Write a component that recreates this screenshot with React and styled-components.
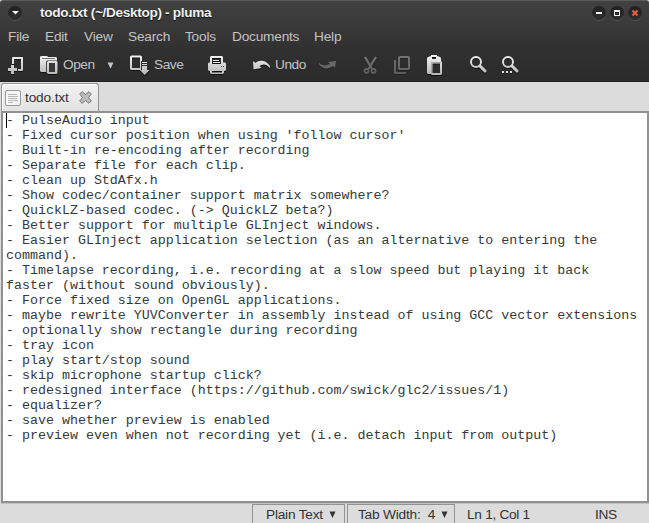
import React from "react";
import styled, { createGlobalStyle } from "styled-components";

const Global = createGlobalStyle`
  * { box-sizing: border-box; }
  html, body { margin: 0; overflow: hidden; background: #dcdcdc; }
  body {
    font: 13.7px/16px "Liberation Sans", Arial, sans-serif;
    letter-spacing: -0.22px;
    color: #333;
  }
`;

const Window = styled.div`
  width: 649px;
  height: 523px;
  display: flex;
  flex-direction: column;
  overflow: hidden;
  background: #dcdcdc;
`;

const Chrome = styled.header`
  height: 82px;
  flex: none;
  background: linear-gradient(#414141 0, #393939 25px, #303030 50px, #2b2b2b 81px);
  border-top: 1px solid #5b5b5b;
  border-bottom: 1px solid #202020;
  border-radius: 3px 3px 0 0;
  color: #c2c2c2;
`;

const TitleBar = styled.div`
  height: 24px;
  display: flex;
  align-items: center;
  padding: 0 7px 0 8px;
`;

const Title = styled.h1`
  flex: 1;
  margin: 0 0 0 18px;
  font-size: 13.6px;
  line-height: 16px;
  font-weight: bold;
  letter-spacing: -0.32px;
  color: #f0f0f0;
  text-shadow: 0 1px 1px #111;
`;

const WindowButton = styled.span`
  width: 14px;
  height: 14px;
  margin-left: ${(p) => p.$gap || 0}px;
  border-radius: 50%;
  background: linear-gradient(#202020, #303030);
  box-shadow: 0 1px 0 #555;
  svg { display: block; }
`;

const MenuBar = styled.nav`
  height: 24px;
  display: flex;
  align-items: center;
  padding-left: 8px;
`;

const MenuItem = styled.span`
  width: ${(p) => p.$w}px;
  white-space: nowrap;
`;

const ToolBar = styled.div`
  height: 32px;
  display: flex;
  align-items: flex-start;
  padding: 6px 0 0 7px;
`;

const Tool = styled.span`
  width: ${(p) => p.$w}px;
  height: 20px;
  display: flex;
  flex: none;
  align-items: center;
  opacity: ${(p) => (p.$off ? 0.35 : 1)};
  svg { flex: none; filter: drop-shadow(0 1px 0 #111); }
`;

const ToolLabel = styled.span`
  margin-left: ${(p) => p.$gap}px;
  line-height: 19px;
  height: 20px;
  letter-spacing: -0.45px;
`;

const TabStrip = styled.div`
  height: 29px;
  flex: none;
  display: flex;
  align-items: flex-end;
  padding-left: 1px;
`;

const Tab = styled.div`
  width: 98px;
  height: 28px;
  display: flex;
  align-items: center;
  padding-left: 3px;
  border: 1px solid #929292;
  border-bottom: 0;
  border-radius: 3px 3px 0 0;
  background: linear-gradient(#f1f1f1, #e3e3e3);
  box-shadow: inset 1px 1px 0 #fff;
`;

const TabLabel = styled.span`
  width: 54px;
  margin-left: 4px;
  letter-spacing: -0.15px;
`;

const Editor = styled.main`
  height: 392px;
  flex: none;
  margin-left: 1px;
  padding-left: 3px;
  background: #fff;
  border: 2px solid #919191;
  box-shadow: 0 1px 0 #c4c4c4;
`;

const Line = styled.div`
  height: 15px;
  white-space: pre;
  font: 13.32px/15px "Liberation Mono", "Courier New", monospace;
  letter-spacing: 0;
  color: #383838;
`;

const Caret = styled.i`
  display: inline-block;
  width: 1px;
  height: 15px;
  margin-right: -1px;
  vertical-align: top;
  background: #000;
`;

const StatusBar = styled.footer`
  height: 20px;
  flex: none;
  display: flex;
  padding: 1px 0 0 252px;
`;

const StatusButton = styled.span`
  width: ${(p) => p.$w}px;
  height: 20px;
  margin-right: 2px;
  padding-left: ${(p) => p.$pad}px;
  display: flex;
  border: 1px solid #929292;
  line-height: 19px;
  white-space: pre;
  svg { margin: 6px 0 0 6px; }
`;

const StatusText = styled.span`
  width: ${(p) => p.$w}px;
  margin-left: 10px;
  line-height: 21px;
  letter-spacing: -0.3px;
`;

const DefsSvg = styled.svg`
  position: absolute;
  width: 0;
  height: 0;
`;

const Svg = ({ w = 20, h = 20, children }) => (
  <svg width={w} height={h} viewBox={`0 0 ${w} ${h}`} fill="none">
    {children}
  </svg>
);

const MetalGradient = () => (
  <DefsSvg>
    <defs>
      <linearGradient id="metal" gradientUnits="userSpaceOnUse" x1="0" y1="0" x2="0" y2="20">
        <stop stopColor="#f5f5f5" />
        <stop offset="1" stopColor="#b5b5b5" />
      </linearGradient>
    </defs>
  </DefsSvg>
);

const M = "url(#metal)";

const NewIcon = () => (
  <Svg>
    <path d="M6 9V3H15V15H11" stroke={M} strokeWidth="2" strokeLinejoin="round" />
    <path d="M4 10H7V13H10V16H7V19H4V16H1V13H4Z" fill={M} />
  </Svg>
);
const OpenIcon = () => (
  <Svg>
    <path d="M1 3V2L2 1H8L9 2H17L18 3V6H8L7 7V17H2L1 16Z" fill={M} />
    <path d="M3 3.5H16" stroke="#777" />
    <path fillRule="evenodd" d="M9 6H17.5L18.5 7V18L17.5 19H9L8 18V7ZM10 8V17H16V8Z" fill={M} />
    <path d="M10 8H16V17H10Z" fill="#383838" />
    <path d="M7.5 18V6L8.5 5.5H18" stroke="#606060" strokeWidth="0.7" />
  </Svg>
);
const SaveIcon = () => (
  <Svg w={21}>
    <rect x="2" y="1.5" width="10" height="12.5" rx="0.6" stroke={M} strokeWidth="2" />
    <path d="M12 6H19V15H21L16 20L11 15H12Z" fill="#303030" />
    <path d="M13 7H18V8H13ZM13 9H18V10H13ZM13 11H18V15H20.5L15.5 20L11 15H13Z" fill={M} />
  </Svg>
);
const PrintIcon = () => (
  <Svg>
    <path fillRule="evenodd" d="M4 1H15L16 2V7.5H18L19 8.5V15L18 16H17V18L16 19H4L3 18V16H2L1 15V8.5L2 7.5H3V2ZM5 3V9H14V3ZM5 16V17.5H15V16Z" fill={M} />
    <path d="M6 5.5H12M6 7.5H13" stroke="#f0f0f0" />
    <path d="M14 11.5H15M16 11.5H17" stroke="#444" />
  </Svg>
);
const UndoIcon = () => (
  <Svg>
    <path d="M1 6L3.5 8C7 4.5 14 4.5 18 11V13C14 9 11 8.5 7.5 11L9.5 13L1.5 14.5Z" fill={M} />
  </Svg>
);
const RedoIcon = () => (
  <Svg>
    <path d="M1 8C4 11 8 11 12 9L10 7L18 6L17 13L15 11C10 15 4 14 1 9Z" fill={M} />
  </Svg>
);
const CutIcon = () => (
  <Svg>
    <path d="M3 2L10 14M14 2L6.5 14" stroke={M} strokeWidth="2.3" />
    <circle cx="4.5" cy="16" r="2" stroke={M} strokeWidth="1.8" />
    <circle cx="11.5" cy="16" r="2" stroke={M} strokeWidth="1.8" />
  </Svg>
);
const CopyIcon = () => (
  <Svg>
    <rect x="6" y="2" width="10" height="12" rx="0.8" stroke={M} strokeWidth="2" />
    <path d="M2 5V18H13" stroke={M} strokeWidth="2" strokeLinejoin="round" />
  </Svg>
);
const PasteIcon = () => (
  <Svg>
    <path fillRule="evenodd" d="M2 2L5 1V0H11V1L14 2L15 3V6L16 7V19L15 20H6L5 19H2L1 18V3ZM6 2V4H10V2ZM6.5 8.5V18H14V8.5Z" fill={M} />
    <path d="M5.5 18V7.5H15" stroke="#888" strokeWidth="0.6" />
  </Svg>
);
const SearchIcon = ({ dots }) => (
  <Svg>
    <circle cx="7" cy="7" r="5" stroke={M} strokeWidth="2" />
    <path d="M11 11L16 16" stroke={M} strokeWidth="3" strokeLinecap="round" />
    {dots && <path d="M1 17H3M5 17H7M9 17H11" stroke="#ddd" strokeWidth="2" />}
  </Svg>
);
const Arrow = () => (
  <Svg w={7} h={7}>
    <path d="M0.5 0.5H6.5L3.5 7Z" fill="currentColor" />
  </Svg>
);
const DocumentIcon = () => (
  <Svg w={16} h={16}>
    <rect x="0.5" y="0.5" width="15" height="15" rx="1.5" fill="#f8f8f8" stroke="#999" />
    <path d="M3 4.5H12M3 6.5H13M3 8.5H12M3 10.5H13M3 12.5H8" stroke="#b5b5b5" />
  </Svg>
);
const CloseIcon = () => (
  <Svg w={13} h={13}>
    <path d="M3 .7L6.5 3.5L10 .7L12.3 3L9.5 6.5L12.3 10L10 12.3L6.5 9.5L3 12.3L.7 10L3.5 6.5L.7 3Z" fill="#bcbcbc" stroke="#777" strokeLinejoin="round" />
  </Svg>
);

const MENUS = [["File", 37], ["Edit", 39], ["View", 44], ["Search", 57], ["Tools", 47], ["Documents", 82], ["Help", 40]];

const LINES = [
  "- PulseAudio input",
  "- Fixed cursor position when using 'follow cursor'",
  "- Built-in re-encoding after recording",
  "- Separate file for each clip.",
  "- clean up StdAfx.h",
  "- Show codec/container support matrix somewhere?",
  "- QuickLZ-based codec. (-> QuickLZ beta?)",
  "- Better support for multiple GLInject windows.",
  "- Easier GLInject application selection (as an alternative to entering the",
  "command).",
  "- Timelapse recording, i.e. recording at a slow speed but playing it back",
  "faster (without sound obviously).",
  "- Force fixed size on OpenGL applications.",
  "- maybe rewrite YUVConverter in assembly instead of using GCC vector extensions",
  "- optionally show rectangle during recording",
  "- tray icon",
  "- play start/stop sound",
  "- skip microphone startup click?",
  "- redesigned interface (https://github.com/swick/glc2/issues/1)",
  "- equalizer?",
  "- save whether preview is enabled",
  "- preview even when not recording yet (i.e. detach input from output)",
];

export default function App() {
  return (
    <Window>
      <Global />
      <MetalGradient />
      <Chrome>
        <TitleBar>
          <WindowButton><Svg w={14} h={14}><path d="M4 5H11L7.5 8.5Z" fill="#eee" /></Svg></WindowButton>
          <Title>todo.txt (~/Desktop) - pluma</Title>
          <WindowButton><Svg w={14} h={14}><path d="M4 7H10" stroke="#eee" strokeWidth="2" /></Svg></WindowButton>
          <WindowButton $gap={4}><Svg w={14} h={14}><path fillRule="evenodd" d="M4 4H10V10H4ZM5 6V9H9V6Z" fill="#eee" /></Svg></WindowButton>
          <WindowButton $gap={4}><Svg w={14} h={14}><path d="M4.5 4.5L9.5 9.5M9.5 4.5L4.5 9.5" stroke="#ed6542" strokeWidth="1.8" /></Svg></WindowButton>
        </TitleBar>
        <MenuBar>
          {MENUS.map(([name, w]) => <MenuItem key={name} $w={w}>{name}</MenuItem>)}
        </MenuBar>
        <ToolBar>
          <Tool $w={32}><NewIcon /></Tool>
          <Tool $w={68}><OpenIcon /><ToolLabel $gap={4}>Open</ToolLabel></Tool>
          <Tool $w={22}><Arrow /></Tool>
          <Tool $w={78}><SaveIcon /><ToolLabel $gap={4}>Save</ToolLabel></Tool>
          <Tool $w={45}><PrintIcon /></Tool>
          <Tool $w={66}><UndoIcon /><ToolLabel $gap={3}>Undo</ToolLabel></Tool>
          <Tool $w={44} $off><RedoIcon /></Tool>
          <Tool $w={31} $off><CutIcon /></Tool>
          <Tool $w={33} $off><CopyIcon /></Tool>
          <Tool $w={43}><PasteIcon /></Tool>
          <Tool $w={32}><SearchIcon /></Tool>
          <Tool $w={20}><SearchIcon dots /></Tool>
        </ToolBar>
      </Chrome>
      <TabStrip>
        <Tab><DocumentIcon /><TabLabel>todo.txt</TabLabel><CloseIcon /></Tab>
      </TabStrip>
      <Editor>
        {LINES.map((text, i) => <Line key={text}>{i === 0 && <Caret />}{text}</Line>)}
      </Editor>
      <StatusBar>
        <StatusButton $w={93} $pad={13}>Plain Text<Arrow /></StatusButton>
        <StatusButton $w={108} $pad={10}>Tab Width:  4<Arrow /></StatusButton>
        <StatusText $w={118}>Ln 1, Col 1</StatusText>
        <StatusText $w={40}>INS</StatusText>
      </StatusBar>
    </Window>
  );
}
